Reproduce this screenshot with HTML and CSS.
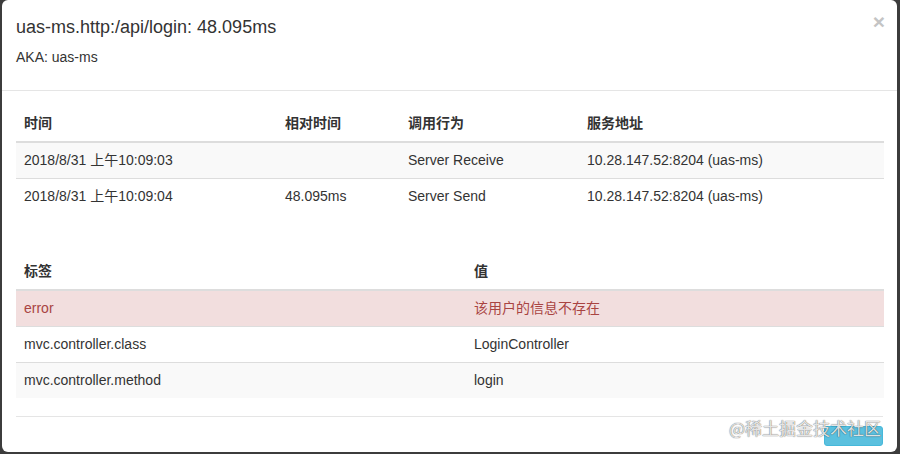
FILE: index.html
```html
<!DOCTYPE html>
<html lang="zh-CN">
<head>
<meta charset="utf-8">
<title>Span</title>
<link rel="stylesheet" href="styles.css">
</head>
<body>
<div class="modal">
  <div class="modal-header">
    <h4 class="modal-title">uas-ms.http:/api/login: 48.095ms</h4>
    <div class="aka">AKA: uas-ms</div>
    <span class="close">×</span>
  </div>
  <div class="modal-body">
    <table class="table t1">
      <colgroup><col class="c1"><col class="c2"><col class="c3"><col class="c4"></colgroup>
      <thead><tr><th>时间</th><th>相对时间</th><th>调用行为</th><th>服务地址</th></tr></thead>
      <tbody>
        <tr><td>2018/8/31 上午10:09:03</td><td></td><td>Server Receive</td><td>10.28.147.52:8204 (uas-ms)</td></tr>
        <tr><td>2018/8/31 上午10:09:04</td><td>48.095ms</td><td>Server Send</td><td>10.28.147.52:8204 (uas-ms)</td></tr>
      </tbody>
    </table>
    <table class="table t2">
      <colgroup><col class="k"><col class="v"></colgroup>
      <thead><tr><th>标签</th><th>值</th></tr></thead>
      <tbody>
        <tr class="danger"><td>error</td><td>该用户的信息不存在</td></tr>
        <tr><td>mvc.controller.class</td><td>LoginController</td></tr>
        <tr><td>mvc.controller.method</td><td>login</td></tr>
      </tbody>
    </table>
  </div>
  <div class="modal-footer">
    <button class="btn" aria-label="关闭"></button>
  </div>
  <div class="watermark">@稀土掘金技术社区</div>
</div>
</body>
</html>
```
FILE: styles.css
```css
* { box-sizing: border-box; }
html, body { margin: 0; padding: 0; }
body {
  background: #3c3c3c;
  font-family: "Liberation Sans", Arial, "Noto Sans CJK SC", sans-serif;
  font-size: 14px;
  color: #333;
  width: 900px;
  height: 454px;
  overflow: hidden;
}
.modal {
  position: relative;
  margin: 0 3px 0 2px;
  height: 452px;
  background: #fff;
  border-radius: 6px;
  display: flex;
  flex-direction: column;
}
.modal-header {
  position: relative;
  height: 91px;
  padding: 17px 14px 0;
  border-bottom: 1px solid #e5e5e5;
}
.modal-title {
  margin: 0;
  font-size: 18px;
  font-weight: normal;
  line-height: 20px;
  color: #333;
}
.aka {
  margin-top: 10px;
  line-height: 20px;
}
.close {
  position: absolute;
  right: 12px;
  top: 10px;
  font-size: 21px;
  font-weight: bold;
  line-height: 24px;
  color: #c4c4c4;
}
.modal-body {
  padding: 15px 14px 0;
  flex: 1;
}
.table {
  width: 868px;
  border-collapse: collapse;
  table-layout: fixed;
}
.t1 { margin-bottom: 40px; }
.t1 .c1 { width: 261px; }
.t1 .c2 { width: 123px; }
.t1 .c3 { width: 179px; }
.t1 .c4 { width: 305px; }
.t2 .k { width: 450px; }
.t2 .v { width: 418px; }
.table th, .table td {
  text-align: left;
  padding: 8px;
  line-height: 19px;
  vertical-align: top;
}
.table th {
  font-weight: bold;
  font-family: "Liberation Sans", "Noto Sans CJK SC", sans-serif;
  border-bottom: 2px solid #ddd;
  padding-bottom: 8px;
}
.table td { border-top: 1px solid #ddd; }
.table tbody tr:first-child td { border-top: 0; }
.table tbody tr:nth-child(odd) { background: #f9f9f9; }
.table tbody tr.danger { background: #f2dede; color: #a94442; }
.modal-footer {
  height: 36px;
  margin: 0 14px;
  border-top: 1px solid #e5e5e5;
  display: flex;
  justify-content: flex-end;
  align-items: flex-start;
  padding-top: 9px;
}
.btn {
  width: 59px;
  height: 20px;
  border: 1px solid #46b8da;
  background: #5bc0de;
  border-radius: 3px;
  padding: 0;
}
.watermark {
  position: absolute;
  right: 16px;
  bottom: 13px;
  font-family: "Noto Sans CJK SC", sans-serif;
  font-size: 17px;
  line-height: 22px;
  color: rgba(255, 255, 255, 0.85);
  text-shadow: 0 0 1px rgba(0, 0, 0, 0.55), 0 0 1px rgba(0, 0, 0, 0.4);
}
```
